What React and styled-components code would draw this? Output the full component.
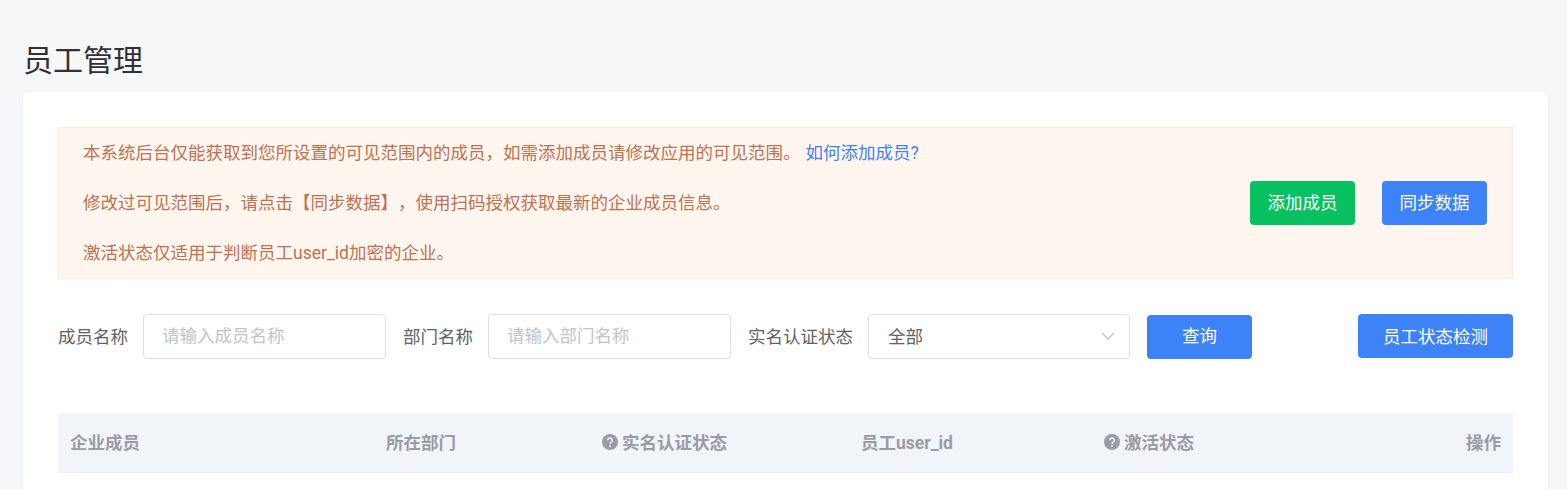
import React from "react";
import styled, { createGlobalStyle } from "styled-components";

const FONT = `Roboto, "Noto Sans CJK SC", "Liberation Sans", sans-serif`;

const Global = createGlobalStyle`
  html, body { margin: 0; padding: 0; background: #f6f7f9; overflow: hidden; }
  body { font-family: ${FONT}; text-spacing-trim: space-all; }
  * { box-sizing: border-box; }
`;

const Page = styled.div`
  width: 1567px;
  height: 489px;
  overflow: hidden;
  padding: 0 19px 0 23px;
`;

const Title = styled.h1`
  margin: 0;
  height: 92px;
  padding-top: 39px;
  font-size: 30px;
  line-height: 44px;
  font-weight: 400;
  color: #303133;
`;

const Card = styled.section`
  background: #fff;
  border-radius: 6px;
  padding: 35px;
  height: 500px;
  box-shadow: 0 1px 4px rgba(0, 21, 41, 0.04);
`;

const Notice = styled.div`
  display: flex;
  align-items: center;
  justify-content: space-between;
  height: 152px;
  padding: 0 25px 0 24px;
  background: #fff6f0;
  border: 1px solid #fdebe0;
  color: #bd7252;
  font-size: 17.5px;
`;

const NoticeLine = styled.p`
  margin: 0;
  line-height: 50px;
  white-space: nowrap;
`;

const NoticeLink = styled.a`
  color: #3f82f8;
  margin-left: 5px;
`;

const NoticeActions = styled.div`
  display: flex;
  gap: 27px;
`;

const Button = styled.button`
  width: ${(p) => p.$width || 105}px;
  height: 44px;
  padding: ${(p) => p.$pad || "0"};
  border: 0;
  border-radius: 4px;
  background: ${(p) => (p.$green ? "#07c160" : "#3e82f7")};
  color: #fff;
  font-family: ${FONT};
  font-size: 17.5px;
  line-height: 42px;
  text-align: center;
`;

const Filters = styled.div`
  display: flex;
  align-items: center;
  height: 45px;
  margin-top: 35px;
`;

const Label = styled.label`
  font-size: 17.5px;
  color: #606266;
  margin-right: ${(p) => p.$gap}px;
  padding-bottom: 2px;
  white-space: nowrap;
`;

const Field = styled.input`
  width: 243px;
  height: 45px;
  margin-right: 17px;
  padding: 0 18px 2px;
  border: 1px solid #dcdfe6;
  border-radius: 4px;
  outline: none;
  background: #fff;
  font-family: ${FONT};
  font-size: 17.5px;
  color: #606266;
  &::placeholder { color: #c0c4cc; opacity: 1; }
`;

const SelectBox = styled.div`
  display: flex;
  align-items: center;
  justify-content: space-between;
  width: 262px;
  height: 45px;
  margin-right: 17px;
  padding: 0 14px 2px 19px;
  border: 1px solid #dcdfe6;
  border-radius: 4px;
  font-size: 17.5px;
  color: #606266;
`;

const Chevron = styled.svg`
  width: 14px;
  height: 8px;
  fill: none;
  stroke: #c0c4cc;
  stroke-width: 1.3;
`;

const QueryButton = styled(Button)`
  align-self: flex-end;
`;

const RightButton = styled(Button)`
  align-self: flex-start;
  margin-left: auto;
`;

const TableHead = styled.div`
  display: grid;
  grid-template-columns: 316px 216px 259px 243px 1fr;
  align-items: center;
  height: 60px;
  margin-top: 54px;
  padding-bottom: 3px;
  background: #f1f4f9;
  border-bottom: 1px solid #e9edf4;
  color: #999ba5;
  font-size: 17.5px;
  font-weight: 700;
`;

const HeadCell = styled.div`
  display: flex;
  align-items: center;
  gap: 4px;
  padding: 0 12px;
  white-space: nowrap;
`;

const IconSvg = styled.svg`
  width: 16px;
  height: 16px;
  flex: none;
  margin-top: 1px;
`;

const TrailingCell = styled.span`
  margin-left: auto;
`;

function HelpIcon() {
  return (
    <IconSvg viewBox="0 0 16 16">
      <circle cx="8" cy="8" r="8" fill="#999ba5" />
      <path d="M5.7 6.2a2.3 2.3 0 1 1 3.5 2c-.8.5-1.2.9-1.2 1.7" fill="none" stroke="#eceef2" strokeWidth="1.5" />
      <circle cx="8" cy="12" r="1" fill="#eceef2" />
    </IconSvg>
  );
}

export default function App() {
  return (
    <Page>
      <Global />
      <Title>员工管理</Title>
      <Card>
        <Notice>
          <div>
            <NoticeLine>
              本系统后台仅能获取到您所设置的可见范围内的成员，如需添加成员请修改应用的可见范围。
              <NoticeLink>如何添加成员?</NoticeLink>
            </NoticeLine>
            <NoticeLine>修改过可见范围后，请点击【同步数据】，使用扫码授权获取最新的企业成员信息。</NoticeLine>
            <NoticeLine>激活状态仅适用于判断员工user_id加密的企业。</NoticeLine>
          </div>
          <NoticeActions>
            <Button $green>添加成员</Button>
            <Button>同步数据</Button>
          </NoticeActions>
        </Notice>
        <Filters>
          <Label $gap={15}>成员名称</Label>
          <Field placeholder="请输入成员名称" />
          <Label $gap={15}>部门名称</Label>
          <Field placeholder="请输入部门名称" />
          <Label $gap={15}>实名认证状态</Label>
          <SelectBox>
            全部
            <Chevron viewBox="0 0 14 8">
              <path d="M1 1l6 6 6-6" />
            </Chevron>
          </SelectBox>
          <QueryButton $pad="0 0 2px">查询</QueryButton>
          <RightButton $width={155} $pad="2px 0 0">员工状态检测</RightButton>
        </Filters>
        <TableHead>
          <HeadCell>企业成员</HeadCell>
          <HeadCell>所在部门</HeadCell>
          <HeadCell><HelpIcon />实名认证状态</HeadCell>
          <HeadCell>员工user_id</HeadCell>
          <HeadCell>
            <HelpIcon />激活状态
            <TrailingCell>操作</TrailingCell>
          </HeadCell>
        </TableHead>
      </Card>
    </Page>
  );
}
